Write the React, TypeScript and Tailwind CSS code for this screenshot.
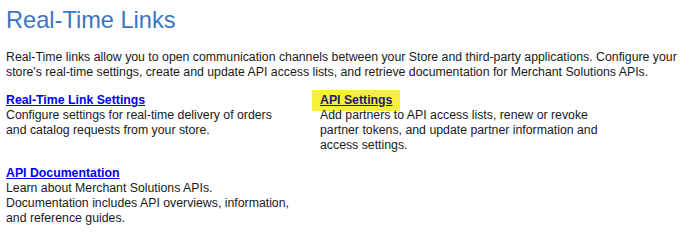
const font = { fontFamily: '"Liberation Sans", Arial, sans-serif' };

interface LinkBlock {
  title: string;
  lines: string[];
  highlighted?: boolean;
}

const blocks: LinkBlock[] = [
  { title: 'Real-Time Link Settings', lines: ['Configure settings for real-time delivery of orders', 'and catalog requests from your store.'] },
  {
    title: 'API Settings',
    lines: ['Add partners to API access lists, renew or revoke', 'partner tokens, and update partner information and', 'access settings.'],
    highlighted: true,
  },
  {
    title: 'API Documentation',
    lines: ['Learn about Merchant Solutions APIs.', 'Documentation includes API overviews, information,', 'and reference guides.'],
  },
];

export default function App() {
  return (
    <div className="h-[241px] w-[689px] overflow-hidden bg-white pl-[6px] pt-[6px] text-[12.3px] leading-[15px] text-[#1a1a1a]" style={font}>
      <h1 className="text-[23.6px] leading-[28px] font-normal text-[#3b74c0]">Real-Time Links</h1>
      <p className="mt-[16px] whitespace-nowrap">
        Real-Time links allow you to open communication channels between your Store and third-party applications. Configure your
        <br />
        store's real-time settings, create and update API access lists, and retrieve documentation for Merchant Solutions APIs.
      </p>
      <div className="mt-[13px] grid grid-cols-[314px_1fr] gap-y-[13px]">
        {blocks.map((block) => (
          <div className="whitespace-nowrap" key={block.title}>
            {block.highlighted ? (
              <span className="-ml-[8px] -mt-[3px] -mb-[3px] inline-block bg-[#f6f03c] px-[8px] pt-[3px] pb-[3px] font-bold text-[#1c1c6a] underline">{block.title}</span>
            ) : (
              <a className="font-bold text-[#0000ee] underline" href="#">
                {block.title}
              </a>
            )}
            {block.lines.map((line) => (
              <div key={line}>{line}</div>
            ))}
          </div>
        ))}
      </div>
    </div>
  );
}
